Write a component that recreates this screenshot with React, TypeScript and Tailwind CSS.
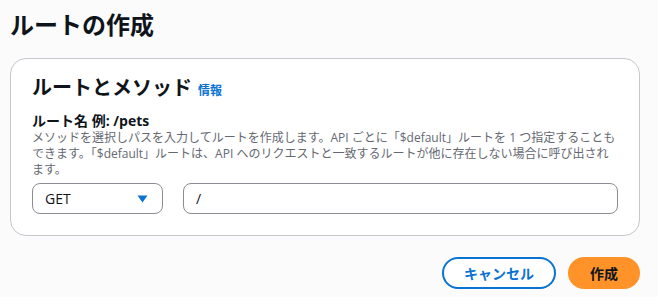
import React from "react";

const font = { fontFamily: '"Open Sans", "Noto Sans CJK JP", sans-serif' };

export default function App() {
  return (
    <div
      className="min-h-screen w-[658px] bg-[#fbfbfc] pl-[10px] pr-[18px] text-[#0f141a]"
      style={font}
    >
      <h1 className="pt-[10px] text-[24px] font-bold leading-[30px]">ルートの作成</h1>

      <div className="mt-[18px] rounded-[16px] border border-[#c6c6cd] bg-white px-[21px] pt-[16px] pb-[21px]">
        <div className="flex items-baseline gap-[6px]">
          <h2 className="text-[20px] font-bold leading-[26px]">ルートとメソッド</h2>
          <a className="text-[12px] font-bold text-[#0972d3]">情報</a>
        </div>

        <div className="mt-[11px]">
          <div className="text-[14px] font-bold leading-[18px]">ルート名 例: /pets</div>
          <p className="text-[12px] leading-[16px] text-[#656871]">
            メソッドを選択しパスを入力してルートを作成します。API ごとに「$default」ルートを 1 つ指定することもできます。「$default」ルートは、API へのリクエストと一致するルートが他に存在しない場合に呼び出されます。
          </p>
        </div>

        <div className="mt-[5px] flex gap-[20px]">
          <button className="flex h-[31px] w-[131px] items-center justify-between rounded-[8px] border border-[#8c8c94] bg-white pl-[12px] pr-[14px] text-[14px]">
            <span>GET</span>
            <svg width="11" height="8" viewBox="0 0 11 8">
              <path d="M0.5 0.5 H10.5 L5.5 7.5 Z" fill="#0972d3" />
            </svg>
          </button>
          <div className="flex h-[31px] flex-1 items-center rounded-[8px] border border-[#8c8c94] bg-white px-[12px] text-[14px]">
            /
          </div>
        </div>
      </div>

      <div className="mt-[21px] flex justify-end gap-[12px]">
        <button className="h-[32px] w-[114px] rounded-full border-2 border-[#0972d3] bg-white text-[14px] font-bold text-[#0972d3]">
          キャンセル
        </button>
        <button className="h-[32px] w-[72px] rounded-full bg-[#ff9228] text-[14px] font-bold text-[#0f141a]">
          作成
        </button>
      </div>
    </div>
  );
}
